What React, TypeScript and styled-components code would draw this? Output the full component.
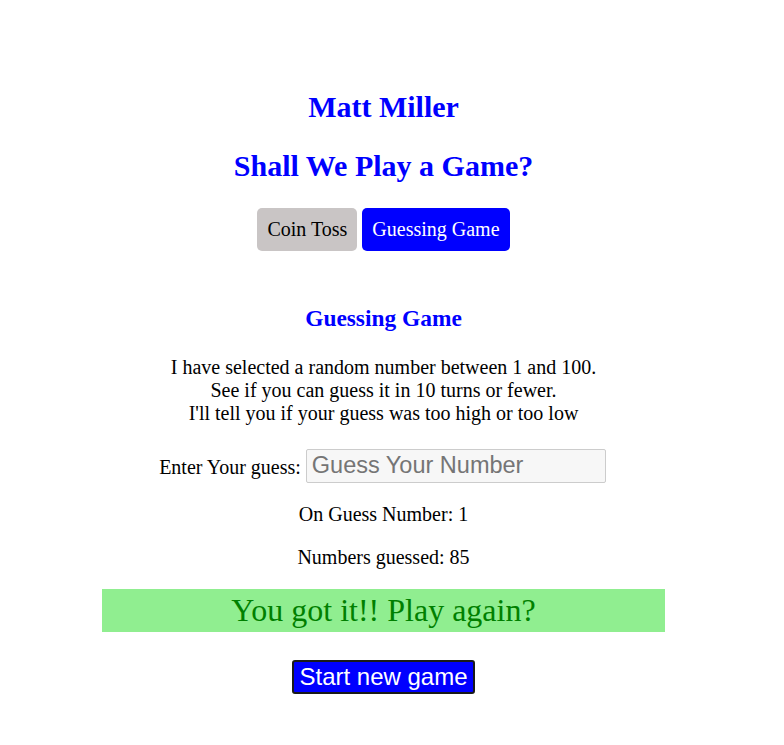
import React from "react";
import styled, { createGlobalStyle } from "styled-components";

const GlobalStyle = createGlobalStyle`
  html, body { margin: 0; padding: 0; background: #ffffff; }
  body {
    margin: 8px;
    width: 751px;
    font-family: "Liberation Serif", "Times New Roman", serif;
    font-size: 20px;
    color: #000;
  }
`;

const Page = styled.div`
  display: flex;
  flex-direction: column;
  align-items: center;
  text-align: center;
  padding-top: 82px;
`;

const Title = styled.h2`
  font-size: 30px;
  font-weight: bold;
  color: #0000ff;
  margin: 0 0 25px;
`;

const Tabs = styled.nav`
  display: flex;
  gap: 5px;
  justify-content: center;
`;

const Tab = styled.button<{ $active?: boolean }>`
  font-family: "Liberation Serif", "Times New Roman", serif;
  font-size: 20px;
  height: 43px;
  padding: 0 10px;
  border: none;
  border-radius: 5px;
  background: ${(p) => (p.$active ? "#0000ff" : "#c9c5c5")};
  color: ${(p) => (p.$active ? "#ffffff" : "#000000")};
`;

const Game = styled.section`
  width: 100%;
  display: flex;
  flex-direction: column;
  align-items: center;
  margin-top: 31px;
`;

const GameTitle = styled.h3`
  font-size: 23.4px;
  font-weight: bold;
  color: #0000ff;
  margin: 23.4px 0;
`;

const Text = styled.p`
  margin: 0 0 20px;
  line-height: 23px;
`;

const GuessRow = styled.div`
  display: flex;
  align-items: center;
  justify-content: center;
  gap: 5px;
  margin-top: 4px;
  margin-left: -2px;
  height: 34px;
`;

const GuessLabel = styled.label`
  padding-top: 4px;
`;

const GuessInput = styled.input`
  box-sizing: border-box;
  width: 300px;
  height: 34px;
  padding: 0 5px;
  font-family: "Liberation Sans", Arial, sans-serif;
  font-size: 23.5px;
  background: #f7f7f7;
  border: 1px solid #cccccc;
  border-radius: 2px;
  outline: none;
  &::placeholder { color: #757575; }
`;

const Stat = styled.p`
  margin: 20px 0 0;
  line-height: 23px;
`;

const Banner = styled.div`
  width: 75%;
  height: 43px;
  margin-top: 20px;
  background: #90ee90;
  color: #008000;
  font-size: 32px;
  line-height: 43px;
`;

const NewGame = styled.button`
  margin-top: 28px;
  height: 34px;
  padding: 0 5px;
  font-family: "Liberation Sans", Arial, sans-serif;
  font-size: 24px;
  color: #ffffff;
  background: #0000ff;
  border: 2px solid #1a1a1a;
  border-radius: 3px;
`;

export default function App() {
  return (
    <>
      <GlobalStyle />
      <Page>
        <Title>Matt Miller</Title>
        <Title>Shall We Play a Game?</Title>
        <Tabs>
          <Tab>Coin Toss</Tab>
          <Tab $active>Guessing Game</Tab>
        </Tabs>
        <Game>
          <GameTitle>Guessing Game</GameTitle>
          <Text>
            I have selected a random number between 1 and 100.
            <br />
            See if you can guess it in 10 turns or fewer.
            <br />
            I'll tell you if your guess was too high or too low
          </Text>
          <GuessRow>
            <GuessLabel htmlFor="guess">Enter Your guess:</GuessLabel>
            <GuessInput id="guess" type="text" placeholder="Guess Your Number" />
          </GuessRow>
          <Stat>On Guess Number: 1</Stat>
          <Stat>Numbers guessed: 85</Stat>
          <Banner>You got it!! Play again?</Banner>
          <NewGame>Start new game</NewGame>
        </Game>
      </Page>
    </>
  );
}
